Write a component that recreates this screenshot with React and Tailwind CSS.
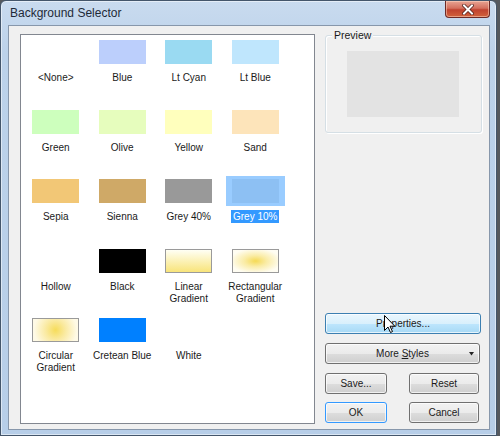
import React from "react";

const items = [
  { name: "<None>" },
  { name: "Blue", swatch: "bg-[#bccffc]" },
  { name: "Lt Cyan", swatch: "bg-[#9adaf2]" },
  { name: "Lt Blue", swatch: "bg-[#bfe6fd]" },
  { name: "Green", swatch: "bg-[#cdffbd]" },
  { name: "Olive", swatch: "bg-[#e6fdbd]" },
  { name: "Yellow", swatch: "bg-[#ffffbd]" },
  { name: "Sand", swatch: "bg-[#fde4ba]" },
  { name: "Sepia", swatch: "bg-[#f2c776]" },
  { name: "Sienna", swatch: "bg-[#cfa967]" },
  { name: "Grey 40%", swatch: "bg-[#999999]" },
  { name: "Grey 10%", swatch: "bg-[#e6e6e6]", selected: true },
  { name: "Hollow" },
  { name: "Black", swatch: "bg-black" },
  {
    name: "Linear Gradient",
    swatch: "bg-[linear-gradient(to_bottom,#fffff4,#f8e47a)] border border-[#9a9a9a]",
  },
  {
    name: "Rectangular Gradient",
    swatch:
      "bg-[radial-gradient(ellipse_at_center,#f5da55_0%,#faeca6_35%,#fffdf2_80%)] border border-[#9a9a9a]",
  },
  {
    name: "Circular Gradient",
    swatch:
      "bg-[radial-gradient(circle_at_center,#f6dc5a_0%,#faeaa2_40%,#fffae6_85%)] border border-[#9a9a9a]",
  },
  { name: "Cretean Blue", swatch: "bg-[#0080ff]" },
  { name: "White" },
];

const SwatchCell = ({ item }) => {
  const lines = item.name.split(" ");
  const twoLine = item.name.includes("Gradient");
  return (
    <div className="h-[69.5px] flex flex-col items-center">
      <div className="relative w-[47px] h-[24px]">
        {item.swatch && <div className={`w-full h-full ${item.swatch}`} />}
        {item.selected && (
          <div className="absolute left-[-6px] right-[-6px] top-[-3px] bottom-[-3px] bg-[rgba(51,153,255,0.5)]" />
        )}
      </div>
      <div className="mt-[8px] text-[10px] leading-[12px] text-[#1a1a1a] text-center">
        {twoLine ? (
          <>
            <div>{lines[0]}</div>
            <div>{lines[1]}</div>
          </>
        ) : item.selected ? (
          <span className="bg-[#3399ff] text-white px-[2px] py-[1px]">{item.name}</span>
        ) : (
          item.name
        )}
      </div>
    </div>
  );
};

const Button = ({ children, className = "", variant = "normal" }) => {
  const styles = {
    normal:
      "border-[#707070] bg-[linear-gradient(to_bottom,#f2f2f2_0%,#ebebeb_50%,#dddddd_51%,#cfcfcf_100%)]",
    hover:
      "border-[#3c7fb1] bg-[linear-gradient(to_bottom,#eaf6fd_0%,#d9f0fc_50%,#bee6fd_51%,#a7d9f5_100%)]",
    default:
      "border-[#3399ff] bg-[linear-gradient(to_bottom,#f2f2f2_0%,#ebebeb_50%,#dddddd_51%,#cfcfcf_100%)] shadow-[inset_0_0_0_1px_#8ee0fb]",
  };
  return (
    <div
      className={`h-[21px] border rounded-[3px] flex items-center justify-center text-[10px] text-[#1a1a1a] shadow-[inset_0_0_0_1px_rgba(255,255,255,0.7)] ${styles[variant]} ${className}`}
    >
      {children}
    </div>
  );
};

export default function App() {
  return (
    <div
      className="w-[500px] h-[436px] bg-[#55595e] flex"
      style={{ fontFamily: '"Liberation Sans", Arial, sans-serif' }}
    >
      <div className="w-[497px] h-[436px] flex flex-col rounded-t-[6px] border border-[#44566b] bg-[linear-gradient(to_bottom,#c9dbef_0%,#bcd2ea_12%,#b7cee8_100%)] shadow-[inset_0_0_0_1px_rgba(255,255,255,0.5)]">
        {/* title bar */}
        <div className="h-[24px] flex items-start justify-between pl-[9px]">
          <div className="mt-[5px] text-[12px] leading-[14px] text-[#1e2a38]">Background Selector</div>
          <div className="mr-[6px] w-[45px] h-[17px] rounded-b-[4px] border border-t-0 border-[#6d2a26] bg-[linear-gradient(to_bottom,#e8a493_0%,#d4705e_45%,#c0432f_55%,#d1623c_100%)] flex items-center justify-center shadow-[inset_0_0_0_1px_rgba(255,220,200,0.5)]">
            <svg width="12" height="11" viewBox="0 0 12 11">
              <path d="M2 1.5 L10 9.5 M10 1.5 L2 9.5" stroke="#4a1a14" strokeWidth="3.4" strokeLinecap="square" />
              <path d="M2 1.5 L10 9.5 M10 1.5 L2 9.5" stroke="#ffffff" strokeWidth="2" strokeLinecap="square" />
            </svg>
          </div>
        </div>

        {/* client area */}
        <div className="flex-1 ml-[7px] mr-[6px] mb-[5px] border border-[#8797ab] bg-[#f0f0f0] flex pl-[11px] pt-[8px] gap-[10px]">
          {/* list */}
          <div className="w-[295px] h-[390px] border border-[#828790] bg-white">
            <div className="grid grid-cols-[repeat(4,66.5px)] pl-[1.5px] pt-[5px]">
              {items.map((item) => (
                <SwatchCell key={item.name} item={item} />
              ))}
            </div>
          </div>

          {/* right column */}
          <div className="w-[157px] h-[390px] flex flex-col">
            <div className="relative mt-[1px] h-[98px] border border-[#d5dfe5] rounded-[3px] shadow-[inset_1px_1px_0_#ffffff,1px_1px_0_#ffffff]">
              <div className="absolute left-[6px] top-[-8px] px-[2px] bg-[#f0f0f0] text-[10.5px] leading-[14px] text-[#1a1a1a]">
                Preview
              </div>
              <div className="ml-[21px] mt-[15px] w-[112px] h-[66px] bg-[#e3e3e3]" />
            </div>

            <div className="flex-1" />

            <div className="relative">
              <Button variant="hover" className="w-[156px]">
                Properties...
              </Button>
              {/* mouse cursor */}
              <svg className="absolute left-[59px] top-[2px]" width="12" height="19" viewBox="0 0 12 19">
                <path
                  d="M0.5 0.5 L0.5 15.5 L4 12 L6.5 17.5 L8.5 16.6 L6 11.2 L10.8 11.2 Z"
                  fill="#ffffff"
                  stroke="#000000"
                  strokeWidth="1"
                  strokeLinejoin="round"
                />
              </svg>
            </div>
            <Button className="w-[155px] mt-[9px] relative">
              <span>
                More <span className="underline">S</span>tyles
              </span>
              <svg className="absolute right-[5px] top-[8px]" width="5" height="4" viewBox="0 0 5 4">
                <path d="M0 0 L5 0 L2.5 3.5 Z" fill="#222" />
              </svg>
            </Button>
            <div className="flex mt-[9px]">
              <Button className="w-[62px]">Save...</Button>
              <Button className="w-[70px] ml-[22px]">Reset</Button>
            </div>
            <div className="flex mt-[8px] mb-[1px]">
              <Button variant="default" className="w-[62px]">
                OK
              </Button>
              <Button className="w-[70px] ml-[22px]">Cancel</Button>
            </div>
          </div>
        </div>
      </div>
    </div>
  );
}
